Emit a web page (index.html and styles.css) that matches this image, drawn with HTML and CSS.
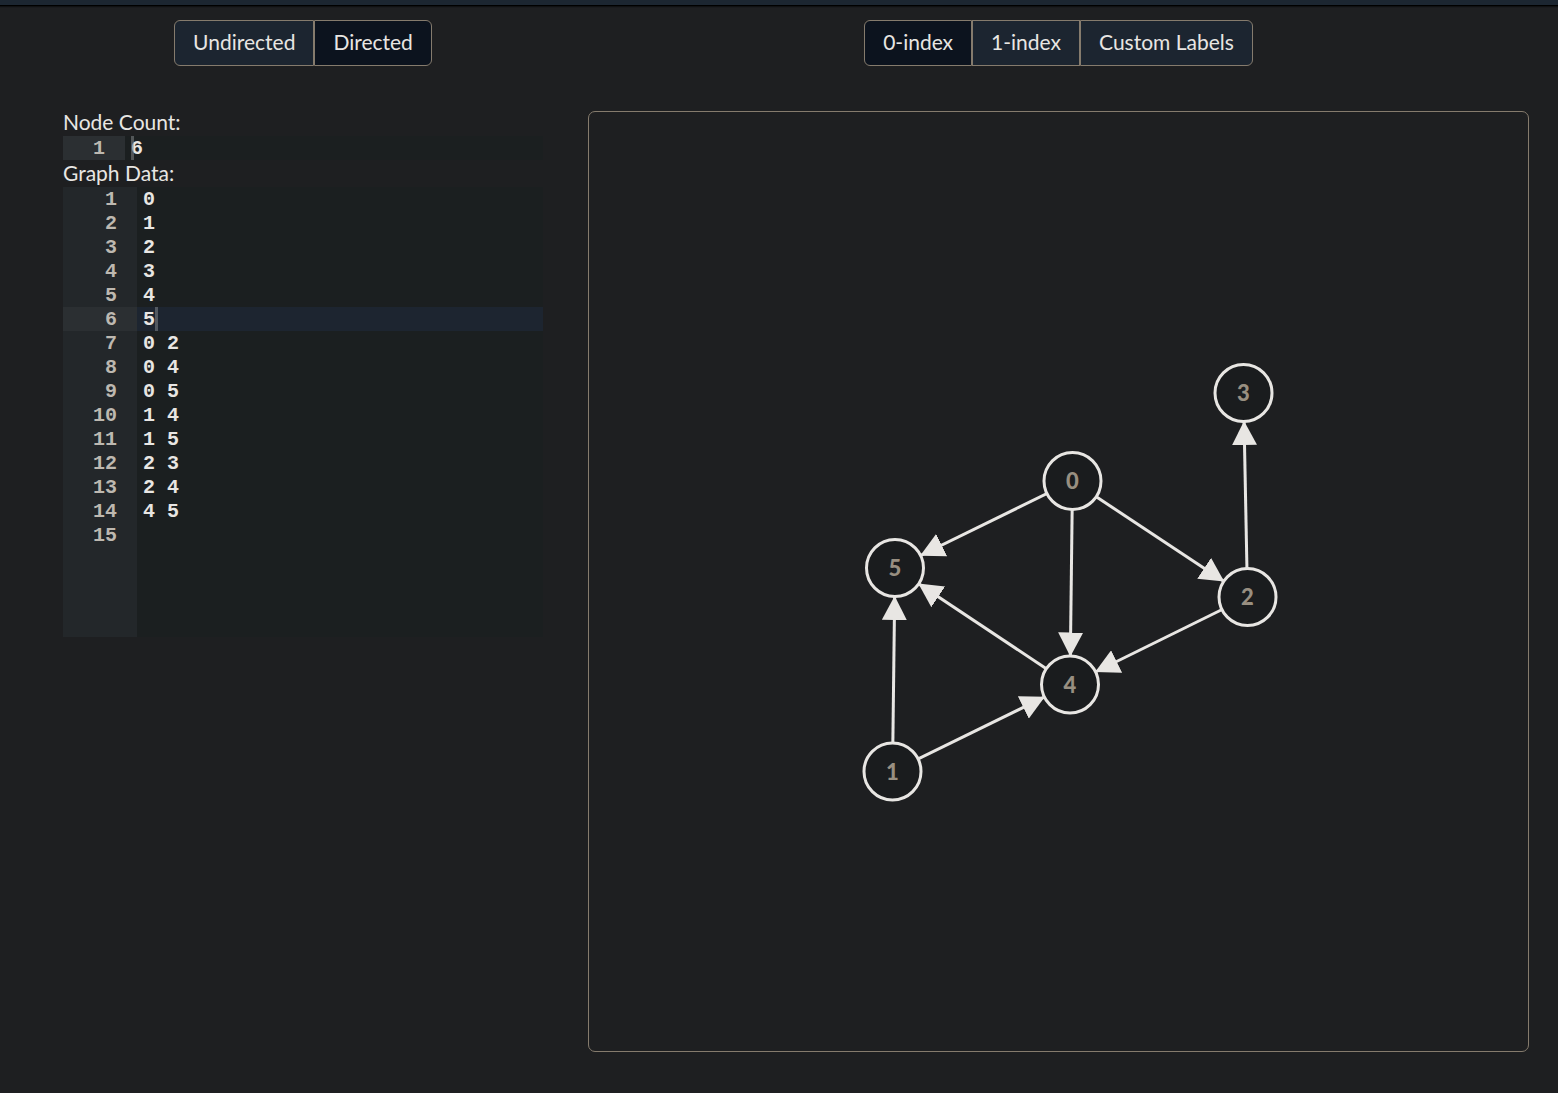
FILE: index.html
```html
<!DOCTYPE html>
<html lang="en">
<head>
<meta charset="utf-8">
<title>Graph Editor</title>
<link rel="stylesheet" href="styles.css">
</head>
<body>
<header class="topbar"></header>
<main class="layout">
  <div class="toggle" role="group" aria-label="Edge type">
    <button type="button" aria-pressed="false">Undirected</button>
    <button type="button" aria-pressed="true">Directed</button>
  </div>
  <div class="toggle" role="group" aria-label="Node labels">
    <button type="button" aria-pressed="true">0-index</button>
    <button type="button" aria-pressed="false">1-index</button>
    <button type="button" aria-pressed="false">Custom Labels</button>
  </div>
  <section class="inputs">
    <label for="node-count">Node Count:</label>
    <div class="editor editor-single">
      <ol class="gutter"><li class="active">1</li></ol>
      <div class="code">
        <input id="node-count" type="text" value="6">
        <span class="caret caret-count"></span>
      </div>
    </div>
    <label for="graph-data">Graph Data:</label>
    <div class="editor editor-data">
      <ol class="gutter">
        <li>1</li><li>2</li><li>3</li><li>4</li><li>5</li><li class="active">6</li><li>7</li><li>8</li><li>9</li><li>10</li><li>11</li><li>12</li><li>13</li><li>14</li><li>15</li>
      </ol>
      <div class="code">
        <textarea id="graph-data" spellcheck="false">0
1
2
3
4
5
0 2
0 4
0 5
1 4
1 5
2 3
2 4
4 5
</textarea>
        <span class="caret caret-data"></span>
      </div>
    </div>
  </section>
  <section class="canvas">
    <svg viewBox="0 0 939 939" role="img" aria-label="Directed graph with 6 nodes">
      <defs>
        <marker id="arrow" markerUnits="userSpaceOnUse" markerWidth="24" markerHeight="25" refX="52" refY="12.5" orient="auto">
          <path d="M0 0L24 12.5L0 25Z"/>
        </marker>
      </defs>
      <g class="edges">
        <line x1="483.5" y1="369" x2="658.5" y2="485"/>
        <line x1="483.5" y1="369" x2="481" y2="572.5"/>
        <line x1="483.5" y1="369" x2="306" y2="456"/>
        <line x1="303.5" y1="659.5" x2="481" y2="572.5"/>
        <line x1="303.5" y1="659.5" x2="306" y2="456"/>
        <line x1="658.5" y1="485" x2="654.5" y2="281"/>
        <line x1="658.5" y1="485" x2="481" y2="572.5"/>
        <line x1="481" y1="572.5" x2="306" y2="456"/>
      </g>
      <g class="nodes">
        <circle cx="483.5" cy="369" r="28.5"/><text x="483.5" y="377">0</text>
        <circle cx="303.5" cy="659.5" r="28.5"/><text x="303.5" y="668">1</text>
        <circle cx="658.5" cy="485" r="28.5"/><text x="658.5" y="493">2</text>
        <circle cx="654.5" cy="281" r="28.5"/><text x="654.5" y="289">3</text>
        <circle cx="481" cy="572.5" r="28.5"/><text x="481" y="581">4</text>
        <circle cx="306" cy="456" r="28.5"/><text x="306" y="464">5</text>
      </g>
    </svg>
  </section>
</main>
</body>
</html>
```

FILE: styles.css
```css
* { box-sizing: border-box; }

body {
  margin: 0;
  background: #1e1f21;
  color: #e8e6e3;
  font: 21px/22px Lato, sans-serif;
}

.topbar {
  height: 6px;
  background: #1c2631;
  border-bottom: 1px solid #000;
  box-shadow: 0 1px 1px #101112;
}

.layout {
  display: grid;
  grid-template-columns: 570fr 941fr;
  gap: 45px 0;
  align-items: start;
  padding: 14px 29px 41px 18px;
}

.toggle {
  display: flex;
  justify-self: center;
}

.toggle button {
  height: 46px;
  padding: 0 18px 3px;
  border: 1px solid #857b6d;
  background: #1c2530;
  color: inherit;
  font: inherit;
}

.toggle button[aria-pressed="true"] { background: #0c131e; }
.toggle button:first-child { border-radius: 6px 0 0 6px; }
.toggle button:last-child { border-radius: 0 6px 6px 0; }

.inputs {
  display: flex;
  flex-direction: column;
  width: 100%;
  max-width: 480px;
  margin: 0 auto;
}

.inputs label { padding-bottom: 3px; }

.editor {
  display: flex;
  font: bold 20px/24px "Liberation Mono", monospace;
}

.gutter {
  flex: none;
  width: 62px;
  margin: 0;
  padding: 0;
  list-style: none;
  background: #23272a;
  color: #bdb8b0;
  text-align: right;
}

.gutter li {
  height: 24px;
  padding: 1px 20px 0 0;
}

.gutter .active { background: #2b2f32; }

.code {
  position: relative;
  flex: 1;
  display: flex;
  background: #1b1f20;
}

.code input,
.code textarea {
  width: 100%;
  margin: 0;
  padding: 1px 6px 0;
  border: 0;
  outline: 0;
  background: none;
  color: inherit;
  font: inherit;
  resize: none;
}

.editor-single { margin-bottom: 2px; }
.editor-single input { height: 24px; }

.editor-data { height: 450px; }
.editor-data .gutter { width: 74px; }
.editor-data textarea {
  background: linear-gradient(#1d2530, #1d2530) 0 120px / 100% 24px no-repeat;
}

.caret {
  position: absolute;
  width: 3px;
  height: 24px;
  background: #8a8d90;
  opacity: .5;
}

.caret-count { left: 6px; top: 0; }
.caret-data { left: 18px; top: 120px; }

.canvas {
  aspect-ratio: 1;
  border: 1px solid #857b6d;
  border-radius: 7px;
}

.canvas svg { display: block; width: 100%; }

.edges line {
  stroke: #e8e6e3;
  stroke-width: 3;
  marker-end: url(#arrow);
}

marker path { fill: #e8e6e3; }

.nodes circle {
  fill: #1a1c1e;
  stroke: #e8e6e3;
  stroke-width: 3;
}

.nodes text {
  fill: #988f81;
  font: 900 22px Lato, sans-serif;
  text-anchor: middle;
}
```
